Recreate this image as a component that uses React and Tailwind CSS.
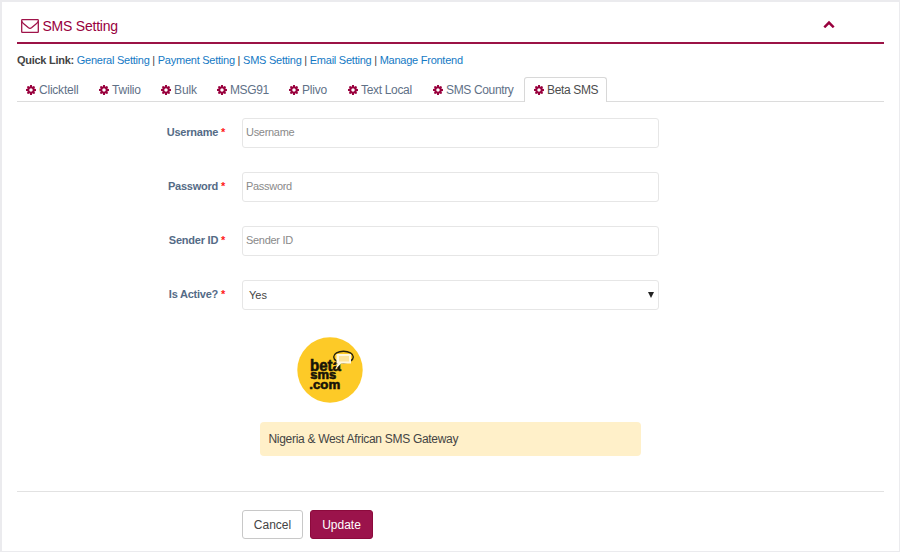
const GEAR =
  "M1024 768q0-106-75-181t-181-75-181 75-75 181 75 181 181 75 181-75 75-181zm512-109v222q0 12-8 23t-20 13l-185 28q-19 54-39 91 35 50 107 138 10 12 10 25t-9 23q-27 37-99 108t-94 71q-12 0-26-9l-138-108q-44 23-91 38-16 136-29 186-7 28-36 28h-222q-14 0-24.500-8.500t-11.500-21.500l-28-184q-49-16-90-37l-141 107q-10 9-25 9-14 0-25-11-126-114-165-168-7-10-7-23 0-12 8-23 15-21 51-66.500t54-70.500q-27-50-41-99l-183-27q-13-2-21-12.500t-8-23.500v-222q0-12 8-23t19-13l186-28q14-46 39-92-40-57-107-138-10-12-10-24 0-10 9-23 26-36 98.500-107.500t94.500-71.500q13 0 26 10l138 107q44-23 91-38 16-136 29-186 7-28 36-28h222q14 0 24.500 8.500t11.500 21.500l28 184q49 16 90 37l142-107q9-9 24-9 13 0 25 10 129 119 165 170 7 8 7 22 0 12-8 23-15 21-51 66.500t-54 70.500q26 50 41 98l183 28q13 2 21 12.500t8 23.500z";

const tabs = [
  { label: "Clicktell", width: "w-[73px]", track: "tracking-[-0.22px]" },
  { label: "Twilio", width: "w-[62px]", track: "tracking-[-0.2px]" },
  { label: "Bulk", width: "w-[56px]", track: "tracking-[-0.1px]" },
  { label: "MSG91", width: "w-[72px]", track: "tracking-[-0.4px]" },
  { label: "Plivo", width: "w-[59px]", track: "tracking-[-0.2px]" },
  { label: "Text Local", width: "w-[85px]", track: "tracking-[-0.33px]" },
  { label: "SMS Country", width: "w-[101px]", track: "tracking-[-0.35px]" },
];

const links = ["General Setting", "Payment Setting", "SMS Setting", "Email Setting", "Manage Frontend"];

function Gear() {
  return (
    <svg viewBox="0 0 1536 1536" className="mr-[3px] h-[10px] w-[10px] shrink-0 fill-[#99003d]">
      <path d={GEAR} />
    </svg>
  );
}

function Row({ label, children }) {
  return (
    <div className="mb-6 flex h-[30px] items-center">
      <div className="w-[208px] pb-[2px] text-right text-[11px] leading-[14px] font-bold tracking-[-0.23px] text-[#546b86]">
        {label} <span className="text-[#ff1a1a]">*</span>
      </div>
      <div className="ml-[17px] h-[30px] w-[417px]">{children}</div>
    </div>
  );
}

function TextField({ name }) {
  return (
    <input
      placeholder={name}
      className="block h-full w-full rounded-[3px] border border-[#e6e6e6] bg-white px-[3px] pb-[2px] text-[11px] tracking-[-0.3px] text-[#444] outline-none placeholder:text-[#8a8a8a]"
    />
  );
}

function Logo() {
  return (
    <svg viewBox="0 0 66 66" className="h-[66px] w-[66px]">
      <circle cx="33" cy="33" r="32.7" fill="#fdca27" />
      <ellipse cx="46.5" cy="20" rx="9.8" ry="5.7" fill="none" stroke="#24200f" strokeWidth="1.4" />
      <g fill="#171408" fontFamily="Liberation Sans, sans-serif" fontWeight="700" stroke="#171408" strokeWidth="0.6">
        <text x="13" y="34" fontSize="16.5" textLength="31" lengthAdjust="spacingAndGlyphs">beta</text>
        <text x="13.3" y="42.4" fontSize="12.5" textLength="26" lengthAdjust="spacingAndGlyphs">sms</text>
        <text x="12.3" y="51.800" fontSize="13.5" textLength="31" lengthAdjust="spacingAndGlyphs">.com</text>
      </g>
      <path d="M39.500 17H54V26.500H44L38.500 32.500 40.500 26.500H39.500Z" fill="#fff8df" />
      <path d="M42 19H52V24.500H42Z" fill="#fde49a" />
    </svg>
  );
}

export default function App() {
  return (
    <div className="h-[552px] w-[900px] overflow-hidden border-t-2 border-r border-b border-l-2 border-[#ebebee] bg-white font-['Liberation_Sans',Arial,sans-serif] text-[12px] text-[#444]">
      <div className="ml-[15px] flex h-[549px] w-[867px] flex-col">
        <header className="flex h-[42px] shrink-0 items-start justify-between border-b-2 border-[#9b1346]">
          <h1 className="flex items-center pt-[15px] pl-1 text-[14px] leading-[19px] tracking-[-0.23px] text-[#99003d]">
            <svg viewBox="0 0 18 14" className="relative -top-px mr-[3.500px] h-[14px] w-[18px]" fill="none" stroke="#a0144a" strokeWidth="1.3">
              <rect x="0.7" y="0.7" width="16.600" height="12.600" rx="0.6" />
              <path d="M1 2.500Q1.500 4 3 5L7.200 8.600Q9 10 10.800 8.600L15 5Q16.500 4 17 2.500" />
            </svg>
            SMS Setting
          </h1>
          <svg viewBox="0 0 12 8" className="mt-[18px] mr-[49px] h-[8px] w-[12px]" fill="none" stroke="#99003d" strokeWidth="2.500">
            <path d="M1.300 7.300 6 2.600 10.700 7.300" />
          </svg>
        </header>
        <nav className="mt-[9px] h-[14px] shrink-0 text-[11px] leading-[14px] tracking-[-0.245px] whitespace-nowrap">
          <strong className="tracking-[-0.27px]">Quick Link:</strong>{" "}
          {links.map((link, i) => (
            <span key={link}>
              {i > 0 && " | "}
              <a className="text-[#1479c4]">{link}</a>
            </span>
          ))}
        </nav>
        <div className="mt-[10px] flex h-[25px] shrink-0 text-[12px] text-[#5f7187] shadow-[inset_0_-1px_0_#dcdcdc]">
          {tabs.map((tab) => (
            <div key={tab.label} className={`flex h-[25px] items-center pl-[9px] whitespace-nowrap ${tab.width} ${tab.track}`}>
              <Gear />
              {tab.label}
            </div>
          ))}
          <div className="-ml-px flex w-[83px] items-center rounded-t-[3px] border border-b-0 border-[#d8d8d8] bg-white pl-[9px] tracking-[-0.35px] whitespace-nowrap text-[#4d4d4d]">
            <Gear />
            Beta SMS
          </div>
        </div>
        <form className="mt-4 shrink-0">
          <Row label="Username"><TextField name="Username" /></Row>
          <Row label="Password"><TextField name="Password" /></Row>
          <Row label="Sender ID"><TextField name="Sender ID" /></Row>
          <Row label="Is Active?">
            <div className="flex h-full items-center justify-between rounded-[3px] border border-[#e6e6e6] pr-1 pl-[6px] text-[11px]">
              <span>Yes</span>
              <svg viewBox="0 0 6 6" className="h-[6px] w-[6px] fill-[#222]"><path d="M0 0H6L3 6Z" /></svg>
            </div>
          </Row>
        </form>
        <div className="mt-[3px] ml-[280px] h-[66px] shrink-0"><Logo /></div>
        <div className="mt-[19px] ml-[243px] flex h-[34px] w-[381px] shrink-0 items-center rounded-[4px] bg-[#fff0c9] pl-[8.500px] text-[12px] tracking-[-0.3px]">
          Nigeria &amp; West African SMS Gateway
        </div>
        <footer className="mt-[35px] flex border-t border-[#e2e2e2] pt-[18px] pl-[225px] text-[12px]">
          <button className="h-[29px] w-[61px] rounded-[3px] border border-[#c8c8c8] bg-white">Cancel</button>
          <button className="ml-[7px] h-[29px] w-[63px] rounded-[3px] border border-[#8c0a3c] bg-[#9b134b] text-white">Update</button>
        </footer>
      </div>
    </div>
  );
}
